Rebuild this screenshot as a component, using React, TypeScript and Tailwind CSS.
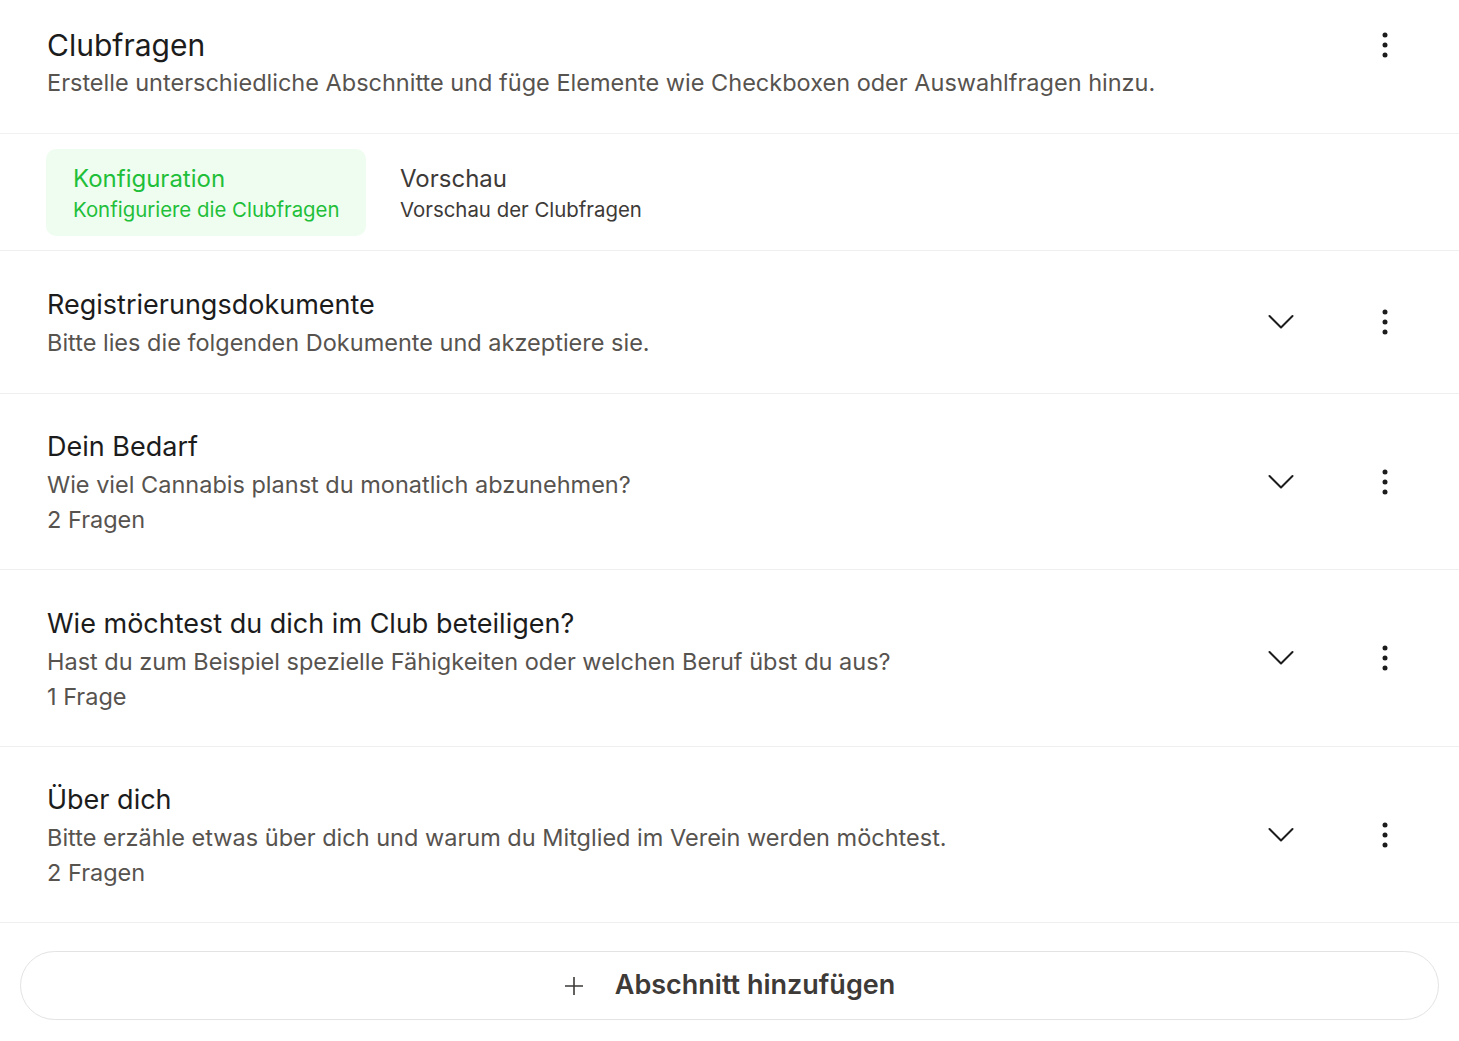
import React from "react";

const Dots = () => (
  <svg width="6" height="26" viewBox="0 0 6 26" fill="#1c1c1c">
    <circle cx="3" cy="3" r="2.5" />
    <circle cx="3" cy="13" r="2.5" />
    <circle cx="3" cy="23" r="2.5" />
  </svg>
);

const Chevron = () => (
  <svg width="26" height="16" viewBox="0 0 26 16" fill="none" stroke="#1c1c1c" strokeWidth="2" strokeLinecap="round" strokeLinejoin="round">
    <path d="M1.5 2 L13 13.5 L24.5 2" />
  </svg>
);

const sections = [
  { title: "Registrierungsdokumente", desc: "Bitte lies die folgenden Dokumente und akzeptiere sie.", count: null, h: "h-[143px]" },
  { title: "Dein Bedarf", desc: "Wie viel Cannabis planst du monatlich abzunehmen?", count: "2 Fragen", h: "h-[176px]" },
  { title: "Wie möchtest du dich im Club beteiligen?", desc: "Hast du zum Beispiel spezielle Fähigkeiten oder welchen Beruf übst du aus?", count: "1 Frage", h: "h-[177px]" },
  { title: "Über dich", desc: "Bitte erzähle etwas über dich und warum du Mitglied im Verein werden möchtest.", count: "2 Fragen", h: "h-[176px]" },
];

export default function App() {
  return (
    <div className="w-[1459px] h-[1041px] bg-white overflow-hidden" style={{ fontFamily: "Inter, 'Noto Sans', sans-serif" }}>
      <div className="flex items-start justify-between pl-[47px] pr-[71px] pt-[26px] h-[134px] border-b border-[#f1f1f1]">
        <div>
          <div className="text-[30px] leading-[38px] text-[#1c1c1c]">Clubfragen</div>
          <div className="text-[23.5px] leading-[36px] text-[#57534f] mt-[1px]">Erstelle unterschiedliche Abschnitte und füge Elemente wie Checkboxen oder Auswahlfragen hinzu.</div>
        </div>
        <div className="mt-[6px]"><Dots /></div>
      </div>
      <div className="flex items-center gap-[8px] pl-[46px] h-[117px] border-b border-[#efefef]">
        <div className="w-[320px] h-[87px] rounded-[10px] bg-[#effdf1] pl-[27px] flex flex-col justify-center pt-[4px]">
          <div className="text-[24px] leading-[31px] text-[#1fbf39]">Konfiguration</div>
          <div className="text-[20.4px] leading-[31px] text-[#1fbf39]">Konfiguriere die Clubfragen</div>
        </div>
        <div className="h-[87px] pl-[26px] flex flex-col justify-center pt-[4px]">
          <div className="text-[24px] leading-[31px] text-[#3d3a37]">Vorschau</div>
          <div className="text-[20.4px] leading-[31px] text-[#3d3a37]">Vorschau der Clubfragen</div>
        </div>
      </div>
      {sections.map((s, i) => (
        <div key={i} className={`flex items-center justify-between pl-[47px] pr-[71px] border-b border-[#efefef] ${s.h}`}>
          <div className="pt-[3px]">
            <div className="text-[27px] leading-[36px] text-[#1c1c1c]">{s.title}</div>
            <div className="text-[23.5px] leading-[36px] text-[#57534f] mt-[2px]">{s.desc}</div>
            {s.count && <div className="text-[23.5px] leading-[34px] text-[#57534f]">{s.count}</div>}
          </div>
          <div className="flex items-center gap-[88px]">
            <Chevron />
            <Dots />
          </div>
        </div>
      ))}
      <div className="px-[20px] pt-[28px]">
        <div className="h-[69px] rounded-full border border-[#e3e3e3] flex items-center justify-center gap-[31px]">
          <svg width="20" height="20" viewBox="0 0 20 20" stroke="#3d3a37" strokeWidth="1.6" fill="none">
            <path d="M10 1 V19 M1 10 H19" />
          </svg>
          <span className="text-[27px] font-semibold text-[#3d3a37]">Abschnitt hinzufügen</span>
        </div>
      </div>
    </div>
  );
}
